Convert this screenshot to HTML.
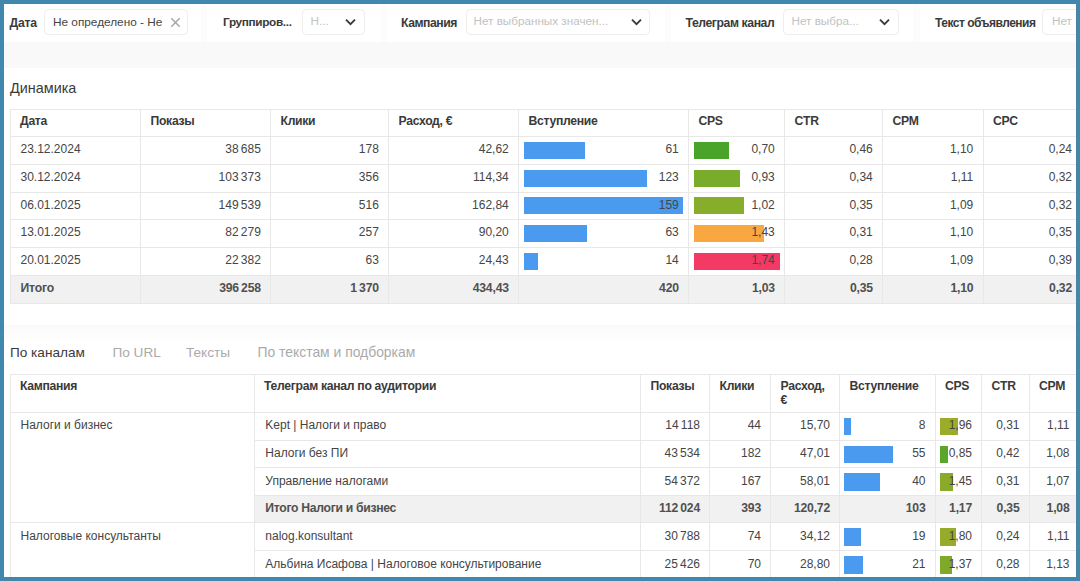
<!DOCTYPE html>
<html><head><meta charset="utf-8"><style>
html,body{margin:0;padding:0;}
body{width:1080px;height:581px;overflow:hidden;position:relative;background:#fff;font-family:"Liberation Sans", sans-serif;}
.t{position:absolute;line-height:1;white-space:nowrap;}
.r{position:absolute;}
.s{letter-spacing:-1.2px;}
.frame{position:absolute;left:0;top:0;width:1080px;height:581px;box-sizing:border-box;border:4px solid #4088ae;z-index:10;}
.frame2{position:absolute;left:3px;top:3px;width:1074px;height:575px;box-sizing:border-box;border:1px solid #4c83a2;z-index:11;}
</style></head><body>
<div class="r" style="left:4.00px;top:4.00px;width:1072.00px;height:38.00px;background:#fcfcfc;"></div>
<div class="r" style="left:4.00px;top:4.00px;width:196.50px;height:38.00px;background:#ffffff;"></div>
<div class="r" style="left:207.00px;top:4.00px;width:173.50px;height:38.00px;background:#ffffff;"></div>
<div class="r" style="left:387.00px;top:4.00px;width:277.50px;height:38.00px;background:#ffffff;"></div>
<div class="r" style="left:671.00px;top:4.00px;width:242.00px;height:38.00px;background:#ffffff;"></div>
<div class="r" style="left:920.00px;top:4.00px;width:156.00px;height:38.00px;background:#ffffff;"></div>
<div class="r" style="left:4.00px;top:42.00px;width:1072.00px;height:26.00px;background:#f9f9f9;"></div>
<div class="t" style="left:9.50px;top:16.57px;font-size:12.2px;font-weight:bold;color:#3a3a3a;letter-spacing:-0.25px;">Дата</div>
<div class="r" style="left:44px;top:9px;width:143.5px;height:25.5px;border:1px solid #ededed;border-radius:4.5px;box-sizing:border-box;background:#fff"></div>
<div class="t" style="left:53.00px;top:16.91px;font-size:11.8px;font-weight:normal;color:#444;">Не определено - Не</div>
<svg class="r" style="left:170px;top:17px" width="11" height="11" viewBox="0 0 11 11"><path d="M1.3 1.3 L9.7 9.7 M9.7 1.3 L1.3 9.7" fill="none" stroke="#a3a3a3" stroke-width="1.4"/></svg>
<div class="t" style="left:223.00px;top:16.91px;font-size:11.8px;font-weight:bold;color:#3a3a3a;letter-spacing:-0.35px;">Группиров...</div>
<div class="r" style="left:302px;top:9px;width:63px;height:25.5px;border:1px solid #ededed;border-radius:4.5px;box-sizing:border-box;background:#fff"></div>
<div class="t" style="left:310.50px;top:14.90px;font-size:11.7px;font-weight:normal;color:#c2c2c2;">Н...</div>
<svg class="r" style="left:344.5px;top:18px" width="11" height="8" viewBox="0 0 11 8"><path d="M1 1.6 L5.5 6.1 L10 1.6" fill="none" stroke="#3a3a3a" stroke-width="1.9"/></svg>
<div class="t" style="left:401.00px;top:16.57px;font-size:12.2px;font-weight:bold;color:#3a3a3a;letter-spacing:-0.45px;">Кампания</div>
<div class="r" style="left:466px;top:9px;width:183.5px;height:25.5px;border:1px solid #ededed;border-radius:4.5px;box-sizing:border-box;background:#fff"></div>
<div class="t" style="left:473.50px;top:14.90px;font-size:11.7px;font-weight:normal;color:#c2c2c2;">Нет выбранных значен...</div>
<svg class="r" style="left:630.5px;top:18px" width="11" height="8" viewBox="0 0 11 8"><path d="M1 1.6 L5.5 6.1 L10 1.6" fill="none" stroke="#3a3a3a" stroke-width="1.9"/></svg>
<div class="t" style="left:685.50px;top:16.57px;font-size:12.2px;font-weight:bold;color:#3a3a3a;letter-spacing:-0.4px;">Телеграм канал</div>
<div class="r" style="left:783px;top:9px;width:115.5px;height:25.5px;border:1px solid #ededed;border-radius:4.5px;box-sizing:border-box;background:#fff"></div>
<div class="t" style="left:791.50px;top:14.90px;font-size:11.7px;font-weight:normal;color:#c2c2c2;">Нет выбра...</div>
<svg class="r" style="left:879px;top:18px" width="11" height="8" viewBox="0 0 11 8"><path d="M1 1.6 L5.5 6.1 L10 1.6" fill="none" stroke="#3a3a3a" stroke-width="1.9"/></svg>
<div class="t" style="left:935.00px;top:16.74px;font-size:12px;font-weight:bold;color:#3a3a3a;letter-spacing:-0.5px;">Текст объявления</div>
<div class="r" style="left:1042px;top:9px;width:58px;height:25.5px;border:1px solid #ededed;border-radius:4.5px;box-sizing:border-box;background:#fff"></div>
<div class="t" style="left:1052.00px;top:14.90px;font-size:11.7px;font-weight:normal;color:#c2c2c2;">Нет выбранных</div>
<div class="t" style="left:10.00px;top:81.11px;font-size:14.4px;font-weight:normal;color:#3a3a3a;">Динамика</div>
<div class="r" style="left:10.00px;top:275.40px;width:1066.00px;height:27.80px;background:#f1f1f1;"></div>
<div class="r" style="left:10.00px;top:109.00px;width:1066.00px;height:1.00px;background:#e8e8e8;"></div>
<div class="r" style="left:10.00px;top:136.00px;width:1066.00px;height:1.00px;background:#e8e8e8;"></div>
<div class="r" style="left:10.00px;top:163.80px;width:1066.00px;height:1.00px;background:#e8e8e8;"></div>
<div class="r" style="left:10.00px;top:191.50px;width:1066.00px;height:1.00px;background:#e8e8e8;"></div>
<div class="r" style="left:10.00px;top:219.30px;width:1066.00px;height:1.00px;background:#e8e8e8;"></div>
<div class="r" style="left:10.00px;top:247.10px;width:1066.00px;height:1.00px;background:#e8e8e8;"></div>
<div class="r" style="left:10.00px;top:274.90px;width:1066.00px;height:1.00px;background:#e8e8e8;"></div>
<div class="r" style="left:10.00px;top:302.70px;width:1066.00px;height:1.00px;background:#e8e8e8;"></div>
<div class="r" style="left:9.50px;top:109.00px;width:1.00px;height:194.50px;background:#e8e8e8;"></div>
<div class="r" style="left:140.00px;top:109.00px;width:1.00px;height:194.50px;background:#e8e8e8;"></div>
<div class="r" style="left:270.00px;top:109.00px;width:1.00px;height:194.50px;background:#e8e8e8;"></div>
<div class="r" style="left:388.00px;top:109.00px;width:1.00px;height:194.50px;background:#e8e8e8;"></div>
<div class="r" style="left:518.00px;top:109.00px;width:1.00px;height:194.50px;background:#e8e8e8;"></div>
<div class="r" style="left:688.00px;top:109.00px;width:1.00px;height:194.50px;background:#e8e8e8;"></div>
<div class="r" style="left:784.00px;top:109.00px;width:1.00px;height:194.50px;background:#e8e8e8;"></div>
<div class="r" style="left:882.00px;top:109.00px;width:1.00px;height:194.50px;background:#e8e8e8;"></div>
<div class="r" style="left:982.50px;top:109.00px;width:1.00px;height:194.50px;background:#e8e8e8;"></div>
<div class="t" style="left:20.00px;top:114.97px;font-size:12.2px;font-weight:bold;color:#3a3a3a;letter-spacing:-0.3px;">Дата</div>
<div class="t" style="left:150.50px;top:114.97px;font-size:12.2px;font-weight:bold;color:#3a3a3a;letter-spacing:-0.3px;">Показы</div>
<div class="t" style="left:280.50px;top:114.97px;font-size:12.2px;font-weight:bold;color:#3a3a3a;letter-spacing:-0.3px;">Клики</div>
<div class="t" style="left:398.50px;top:114.97px;font-size:12.2px;font-weight:bold;color:#3a3a3a;letter-spacing:-0.3px;">Расход, €</div>
<div class="t" style="left:528.50px;top:114.97px;font-size:12.2px;font-weight:bold;color:#3a3a3a;letter-spacing:-0.3px;">Вступление</div>
<div class="t" style="left:698.50px;top:114.97px;font-size:12.2px;font-weight:bold;color:#3a3a3a;letter-spacing:-0.3px;">CPS</div>
<div class="t" style="left:794.50px;top:114.97px;font-size:12.2px;font-weight:bold;color:#3a3a3a;letter-spacing:-0.3px;">CTR</div>
<div class="t" style="left:892.50px;top:114.97px;font-size:12.2px;font-weight:bold;color:#3a3a3a;letter-spacing:-0.3px;">CPM</div>
<div class="t" style="left:993.00px;top:114.97px;font-size:12.2px;font-weight:bold;color:#3a3a3a;letter-spacing:-0.3px;">CPC</div>
<div class="r" style="left:524.40px;top:141.80px;width:61.00px;height:17.10px;background:#4a9bf0;"></div>
<div class="r" style="left:694.40px;top:141.80px;width:34.30px;height:17.10px;background:#4ba42a;"></div>
<div class="t" style="left:20.50px;top:143.14px;font-size:12px;font-weight:normal;color:#454545;">23.12.2024</div>
<div class="t" style="left:-139.20px;width:400px;text-align:right;top:143.14px;font-size:12px;font-weight:normal;color:#454545;">38<span class="s"> </span>685</div>
<div class="t" style="left:-21.20px;width:400px;text-align:right;top:143.14px;font-size:12px;font-weight:normal;color:#454545;">178</div>
<div class="t" style="left:108.80px;width:400px;text-align:right;top:143.14px;font-size:12px;font-weight:normal;color:#454545;">42,62</div>
<div class="t" style="left:278.80px;width:400px;text-align:right;top:143.14px;font-size:12px;font-weight:normal;color:#454545;">61</div>
<div class="t" style="left:374.80px;width:400px;text-align:right;top:143.14px;font-size:12px;font-weight:normal;color:#454545;">0,70</div>
<div class="t" style="left:472.80px;width:400px;text-align:right;top:143.14px;font-size:12px;font-weight:normal;color:#454545;">0,46</div>
<div class="t" style="left:573.30px;width:400px;text-align:right;top:143.14px;font-size:12px;font-weight:normal;color:#454545;">1,10</div>
<div class="t" style="left:672.00px;width:400px;text-align:right;top:143.14px;font-size:12px;font-weight:normal;color:#454545;">0,24</div>
<div class="r" style="left:524.40px;top:169.60px;width:123.00px;height:17.10px;background:#4a9bf0;"></div>
<div class="r" style="left:694.40px;top:169.60px;width:45.57px;height:17.10px;background:#7aac2b;"></div>
<div class="t" style="left:20.50px;top:170.94px;font-size:12px;font-weight:normal;color:#454545;">30.12.2024</div>
<div class="t" style="left:-139.20px;width:400px;text-align:right;top:170.94px;font-size:12px;font-weight:normal;color:#454545;">103<span class="s"> </span>373</div>
<div class="t" style="left:-21.20px;width:400px;text-align:right;top:170.94px;font-size:12px;font-weight:normal;color:#454545;">356</div>
<div class="t" style="left:108.80px;width:400px;text-align:right;top:170.94px;font-size:12px;font-weight:normal;color:#454545;">114,34</div>
<div class="t" style="left:278.80px;width:400px;text-align:right;top:170.94px;font-size:12px;font-weight:normal;color:#454545;">123</div>
<div class="t" style="left:374.80px;width:400px;text-align:right;top:170.94px;font-size:12px;font-weight:normal;color:#454545;">0,93</div>
<div class="t" style="left:472.80px;width:400px;text-align:right;top:170.94px;font-size:12px;font-weight:normal;color:#454545;">0,34</div>
<div class="t" style="left:573.30px;width:400px;text-align:right;top:170.94px;font-size:12px;font-weight:normal;color:#454545;">1,11</div>
<div class="t" style="left:672.00px;width:400px;text-align:right;top:170.94px;font-size:12px;font-weight:normal;color:#454545;">0,32</div>
<div class="r" style="left:524.40px;top:197.30px;width:159.00px;height:17.10px;background:#4a9bf0;"></div>
<div class="r" style="left:694.40px;top:197.30px;width:49.98px;height:17.10px;background:#86ae2a;"></div>
<div class="t" style="left:20.50px;top:198.64px;font-size:12px;font-weight:normal;color:#454545;">06.01.2025</div>
<div class="t" style="left:-139.20px;width:400px;text-align:right;top:198.64px;font-size:12px;font-weight:normal;color:#454545;">149<span class="s"> </span>539</div>
<div class="t" style="left:-21.20px;width:400px;text-align:right;top:198.64px;font-size:12px;font-weight:normal;color:#454545;">516</div>
<div class="t" style="left:108.80px;width:400px;text-align:right;top:198.64px;font-size:12px;font-weight:normal;color:#454545;">162,84</div>
<div class="t" style="left:278.80px;width:400px;text-align:right;top:198.64px;font-size:12px;font-weight:normal;color:#454545;">159</div>
<div class="t" style="left:374.80px;width:400px;text-align:right;top:198.64px;font-size:12px;font-weight:normal;color:#454545;">1,02</div>
<div class="t" style="left:472.80px;width:400px;text-align:right;top:198.64px;font-size:12px;font-weight:normal;color:#454545;">0,35</div>
<div class="t" style="left:573.30px;width:400px;text-align:right;top:198.64px;font-size:12px;font-weight:normal;color:#454545;">1,09</div>
<div class="t" style="left:672.00px;width:400px;text-align:right;top:198.64px;font-size:12px;font-weight:normal;color:#454545;">0,32</div>
<div class="r" style="left:524.40px;top:225.10px;width:63.00px;height:17.10px;background:#4a9bf0;"></div>
<div class="r" style="left:694.40px;top:225.10px;width:70.07px;height:17.10px;background:#f9a740;"></div>
<div class="t" style="left:20.50px;top:226.44px;font-size:12px;font-weight:normal;color:#454545;">13.01.2025</div>
<div class="t" style="left:-139.20px;width:400px;text-align:right;top:226.44px;font-size:12px;font-weight:normal;color:#454545;">82<span class="s"> </span>279</div>
<div class="t" style="left:-21.20px;width:400px;text-align:right;top:226.44px;font-size:12px;font-weight:normal;color:#454545;">257</div>
<div class="t" style="left:108.80px;width:400px;text-align:right;top:226.44px;font-size:12px;font-weight:normal;color:#454545;">90,20</div>
<div class="t" style="left:278.80px;width:400px;text-align:right;top:226.44px;font-size:12px;font-weight:normal;color:#454545;">63</div>
<div class="t" style="left:374.80px;width:400px;text-align:right;top:226.44px;font-size:12px;font-weight:normal;color:#454545;">1,43</div>
<div class="t" style="left:472.80px;width:400px;text-align:right;top:226.44px;font-size:12px;font-weight:normal;color:#454545;">0,31</div>
<div class="t" style="left:573.30px;width:400px;text-align:right;top:226.44px;font-size:12px;font-weight:normal;color:#454545;">1,10</div>
<div class="t" style="left:672.00px;width:400px;text-align:right;top:226.44px;font-size:12px;font-weight:normal;color:#454545;">0,35</div>
<div class="r" style="left:524.40px;top:252.90px;width:14.00px;height:17.10px;background:#4a9bf0;"></div>
<div class="r" style="left:694.40px;top:252.90px;width:85.26px;height:17.10px;background:#f23a64;"></div>
<div class="t" style="left:20.50px;top:254.24px;font-size:12px;font-weight:normal;color:#454545;">20.01.2025</div>
<div class="t" style="left:-139.20px;width:400px;text-align:right;top:254.24px;font-size:12px;font-weight:normal;color:#454545;">22<span class="s"> </span>382</div>
<div class="t" style="left:-21.20px;width:400px;text-align:right;top:254.24px;font-size:12px;font-weight:normal;color:#454545;">63</div>
<div class="t" style="left:108.80px;width:400px;text-align:right;top:254.24px;font-size:12px;font-weight:normal;color:#454545;">24,43</div>
<div class="t" style="left:278.80px;width:400px;text-align:right;top:254.24px;font-size:12px;font-weight:normal;color:#454545;">14</div>
<div class="t" style="left:374.80px;width:400px;text-align:right;top:254.24px;font-size:12px;font-weight:normal;color:#454545;">1,74</div>
<div class="t" style="left:472.80px;width:400px;text-align:right;top:254.24px;font-size:12px;font-weight:normal;color:#454545;">0,28</div>
<div class="t" style="left:573.30px;width:400px;text-align:right;top:254.24px;font-size:12px;font-weight:normal;color:#454545;">1,09</div>
<div class="t" style="left:672.00px;width:400px;text-align:right;top:254.24px;font-size:12px;font-weight:normal;color:#454545;">0,39</div>
<div class="t" style="left:20.50px;top:281.87px;font-size:12.2px;font-weight:bold;color:#505050;letter-spacing:-0.2px;">Итого</div>
<div class="t" style="left:-139.20px;width:400px;text-align:right;top:281.87px;font-size:12.2px;font-weight:bold;color:#505050;letter-spacing:-0.2px;">396<span class="s"> </span>258</div>
<div class="t" style="left:-21.20px;width:400px;text-align:right;top:281.87px;font-size:12.2px;font-weight:bold;color:#505050;letter-spacing:-0.2px;">1<span class="s"> </span>370</div>
<div class="t" style="left:108.80px;width:400px;text-align:right;top:281.87px;font-size:12.2px;font-weight:bold;color:#505050;letter-spacing:-0.2px;">434,43</div>
<div class="t" style="left:278.80px;width:400px;text-align:right;top:281.87px;font-size:12.2px;font-weight:bold;color:#505050;letter-spacing:-0.2px;">420</div>
<div class="t" style="left:374.80px;width:400px;text-align:right;top:281.87px;font-size:12.2px;font-weight:bold;color:#505050;letter-spacing:-0.2px;">1,03</div>
<div class="t" style="left:472.80px;width:400px;text-align:right;top:281.87px;font-size:12.2px;font-weight:bold;color:#505050;letter-spacing:-0.2px;">0,35</div>
<div class="t" style="left:573.30px;width:400px;text-align:right;top:281.87px;font-size:12.2px;font-weight:bold;color:#505050;letter-spacing:-0.2px;">1,10</div>
<div class="t" style="left:672.00px;width:400px;text-align:right;top:281.87px;font-size:12.2px;font-weight:bold;color:#505050;letter-spacing:-0.2px;">0,32</div>
<div class="r" style="left:4.00px;top:325.00px;width:1072.00px;height:15.00px;background:linear-gradient(#fafafa,#fefefe);"></div>
<div class="t" style="left:10.00px;top:345.89px;font-size:13.6px;font-weight:normal;color:#3a3a3a;">По каналам</div>
<div class="t" style="left:112.50px;top:345.89px;font-size:13.6px;font-weight:normal;color:#aaa;">По URL</div>
<div class="t" style="left:186.00px;top:345.89px;font-size:13.6px;font-weight:normal;color:#aaa;">Тексты</div>
<div class="t" style="left:257.50px;top:345.63px;font-size:13.9px;font-weight:normal;color:#aaa;">По текстам и подборкам</div>
<div class="r" style="left:254.00px;top:495.00px;width:822.00px;height:27.50px;background:#f1f1f1;"></div>
<div class="r" style="left:10.00px;top:373.50px;width:1066.00px;height:1.00px;background:#e8e8e8;"></div>
<div class="r" style="left:10.00px;top:411.50px;width:1066.00px;height:1.00px;background:#e8e8e8;"></div>
<div class="r" style="left:10.00px;top:522.00px;width:1066.00px;height:1.00px;background:#e8e8e8;"></div>
<div class="r" style="left:254.00px;top:439.50px;width:822.00px;height:1.00px;background:#e8e8e8;"></div>
<div class="r" style="left:254.00px;top:467.00px;width:822.00px;height:1.00px;background:#e8e8e8;"></div>
<div class="r" style="left:254.00px;top:494.50px;width:822.00px;height:1.00px;background:#e8e8e8;"></div>
<div class="r" style="left:254.00px;top:550.00px;width:822.00px;height:1.00px;background:#e8e8e8;"></div>
<div class="r" style="left:9.50px;top:374.00px;width:1.00px;height:206.00px;background:#e8e8e8;"></div>
<div class="r" style="left:253.50px;top:374.00px;width:1.00px;height:206.00px;background:#e8e8e8;"></div>
<div class="r" style="left:640.00px;top:374.00px;width:1.00px;height:206.00px;background:#e8e8e8;"></div>
<div class="r" style="left:709.00px;top:374.00px;width:1.00px;height:206.00px;background:#e8e8e8;"></div>
<div class="r" style="left:770.00px;top:374.00px;width:1.00px;height:206.00px;background:#e8e8e8;"></div>
<div class="r" style="left:839.00px;top:374.00px;width:1.00px;height:206.00px;background:#e8e8e8;"></div>
<div class="r" style="left:934.50px;top:374.00px;width:1.00px;height:206.00px;background:#e8e8e8;"></div>
<div class="r" style="left:981.00px;top:374.00px;width:1.00px;height:206.00px;background:#e8e8e8;"></div>
<div class="r" style="left:1028.50px;top:374.00px;width:1.00px;height:206.00px;background:#e8e8e8;"></div>
<div class="t" style="left:20px;top:378.62px;font-size:12.2px;letter-spacing:-0.3px;line-height:14.5px;font-weight:bold;color:#3a3a3a">Кампания</div>
<div class="t" style="left:264px;top:378.62px;font-size:12.2px;letter-spacing:-0.3px;line-height:14.5px;font-weight:bold;color:#3a3a3a">Телеграм канал по аудитории</div>
<div class="t" style="left:650.5px;top:378.62px;font-size:12.2px;letter-spacing:-0.3px;line-height:14.5px;font-weight:bold;color:#3a3a3a">Показы</div>
<div class="t" style="left:719.5px;top:378.62px;font-size:12.2px;letter-spacing:-0.3px;line-height:14.5px;font-weight:bold;color:#3a3a3a">Клики</div>
<div class="t" style="left:780.5px;top:378.62px;font-size:12.2px;letter-spacing:-0.3px;line-height:14.5px;font-weight:bold;color:#3a3a3a">Расход,<br>€</div>
<div class="t" style="left:849.5px;top:378.62px;font-size:12.2px;letter-spacing:-0.3px;line-height:14.5px;font-weight:bold;color:#3a3a3a">Вступление</div>
<div class="t" style="left:945px;top:378.62px;font-size:12.2px;letter-spacing:-0.3px;line-height:14.5px;font-weight:bold;color:#3a3a3a">CPS</div>
<div class="t" style="left:991.5px;top:378.62px;font-size:12.2px;letter-spacing:-0.3px;line-height:14.5px;font-weight:bold;color:#3a3a3a">CTR</div>
<div class="t" style="left:1039px;top:378.62px;font-size:12.2px;letter-spacing:-0.3px;line-height:14.5px;font-weight:bold;color:#3a3a3a">CPM</div>
<div class="r" style="left:844.40px;top:417.50px;width:7.08px;height:17.50px;background:#4a9bf0;"></div>
<div class="r" style="left:940.00px;top:417.50px;width:17.64px;height:17.50px;background:#9aac2a;"></div>
<div class="t" style="left:20.50px;top:419.04px;font-size:12px;font-weight:normal;color:#454545;">Налоги и бизнес</div>
<div class="t" style="left:265.30px;top:419.04px;font-size:12px;font-weight:normal;color:#454545;">Kept | Налоги и право</div>
<div class="t" style="left:300.00px;width:400px;text-align:right;top:419.04px;font-size:12px;font-weight:normal;color:#454545;">14<span class="s"> </span>118</div>
<div class="t" style="left:361.00px;width:400px;text-align:right;top:419.04px;font-size:12px;font-weight:normal;color:#454545;">44</div>
<div class="t" style="left:430.00px;width:400px;text-align:right;top:419.04px;font-size:12px;font-weight:normal;color:#454545;">15,70</div>
<div class="t" style="left:525.50px;width:400px;text-align:right;top:419.04px;font-size:12px;font-weight:normal;color:#454545;">8</div>
<div class="t" style="left:572.00px;width:400px;text-align:right;top:419.04px;font-size:12px;font-weight:normal;color:#454545;">1,96</div>
<div class="t" style="left:619.50px;width:400px;text-align:right;top:419.04px;font-size:12px;font-weight:normal;color:#454545;">0,31</div>
<div class="t" style="left:669.50px;width:400px;text-align:right;top:419.04px;font-size:12px;font-weight:normal;color:#454545;">1,11</div>
<div class="r" style="left:844.40px;top:445.50px;width:48.67px;height:17.50px;background:#4a9bf0;"></div>
<div class="r" style="left:940.00px;top:445.50px;width:7.65px;height:17.50px;background:#5aa52a;"></div>
<div class="t" style="left:265.30px;top:447.04px;font-size:12px;font-weight:normal;color:#454545;">Налоги без ПИ</div>
<div class="t" style="left:300.00px;width:400px;text-align:right;top:447.04px;font-size:12px;font-weight:normal;color:#454545;">43<span class="s"> </span>534</div>
<div class="t" style="left:361.00px;width:400px;text-align:right;top:447.04px;font-size:12px;font-weight:normal;color:#454545;">182</div>
<div class="t" style="left:430.00px;width:400px;text-align:right;top:447.04px;font-size:12px;font-weight:normal;color:#454545;">47,01</div>
<div class="t" style="left:525.50px;width:400px;text-align:right;top:447.04px;font-size:12px;font-weight:normal;color:#454545;">55</div>
<div class="t" style="left:572.00px;width:400px;text-align:right;top:447.04px;font-size:12px;font-weight:normal;color:#454545;">0,85</div>
<div class="t" style="left:619.50px;width:400px;text-align:right;top:447.04px;font-size:12px;font-weight:normal;color:#454545;">0,42</div>
<div class="t" style="left:669.50px;width:400px;text-align:right;top:447.04px;font-size:12px;font-weight:normal;color:#454545;">1,08</div>
<div class="r" style="left:844.40px;top:473.00px;width:35.40px;height:17.50px;background:#4a9bf0;"></div>
<div class="r" style="left:940.00px;top:473.00px;width:13.05px;height:17.50px;background:#8aaa2a;"></div>
<div class="t" style="left:265.30px;top:474.54px;font-size:12px;font-weight:normal;color:#454545;">Управление налогами</div>
<div class="t" style="left:300.00px;width:400px;text-align:right;top:474.54px;font-size:12px;font-weight:normal;color:#454545;">54<span class="s"> </span>372</div>
<div class="t" style="left:361.00px;width:400px;text-align:right;top:474.54px;font-size:12px;font-weight:normal;color:#454545;">167</div>
<div class="t" style="left:430.00px;width:400px;text-align:right;top:474.54px;font-size:12px;font-weight:normal;color:#454545;">58,01</div>
<div class="t" style="left:525.50px;width:400px;text-align:right;top:474.54px;font-size:12px;font-weight:normal;color:#454545;">40</div>
<div class="t" style="left:572.00px;width:400px;text-align:right;top:474.54px;font-size:12px;font-weight:normal;color:#454545;">1,45</div>
<div class="t" style="left:619.50px;width:400px;text-align:right;top:474.54px;font-size:12px;font-weight:normal;color:#454545;">0,31</div>
<div class="t" style="left:669.50px;width:400px;text-align:right;top:474.54px;font-size:12px;font-weight:normal;color:#454545;">1,07</div>
<div class="t" style="left:265.30px;top:501.87px;font-size:12.2px;font-weight:bold;color:#505050;letter-spacing:-0.3px;">Итого Налоги и бизнес</div>
<div class="t" style="left:300.00px;width:400px;text-align:right;top:501.87px;font-size:12.2px;font-weight:bold;color:#505050;letter-spacing:-0.2px;">112<span class="s"> </span>024</div>
<div class="t" style="left:361.00px;width:400px;text-align:right;top:501.87px;font-size:12.2px;font-weight:bold;color:#505050;letter-spacing:-0.2px;">393</div>
<div class="t" style="left:430.00px;width:400px;text-align:right;top:501.87px;font-size:12.2px;font-weight:bold;color:#505050;letter-spacing:-0.2px;">120,72</div>
<div class="t" style="left:525.50px;width:400px;text-align:right;top:501.87px;font-size:12.2px;font-weight:bold;color:#505050;letter-spacing:-0.2px;">103</div>
<div class="t" style="left:572.00px;width:400px;text-align:right;top:501.87px;font-size:12.2px;font-weight:bold;color:#505050;letter-spacing:-0.2px;">1,17</div>
<div class="t" style="left:619.50px;width:400px;text-align:right;top:501.87px;font-size:12.2px;font-weight:bold;color:#505050;letter-spacing:-0.2px;">0,35</div>
<div class="t" style="left:669.50px;width:400px;text-align:right;top:501.87px;font-size:12.2px;font-weight:bold;color:#505050;letter-spacing:-0.2px;">1,08</div>
<div class="r" style="left:844.40px;top:528.00px;width:16.82px;height:17.50px;background:#4a9bf0;"></div>
<div class="r" style="left:940.00px;top:528.00px;width:16.20px;height:17.50px;background:#96ab2a;"></div>
<div class="t" style="left:20.50px;top:529.54px;font-size:12px;font-weight:normal;color:#454545;">Налоговые консультанты</div>
<div class="t" style="left:265.30px;top:529.54px;font-size:12px;font-weight:normal;color:#454545;">nalog.konsultant</div>
<div class="t" style="left:300.00px;width:400px;text-align:right;top:529.54px;font-size:12px;font-weight:normal;color:#454545;">30<span class="s"> </span>788</div>
<div class="t" style="left:361.00px;width:400px;text-align:right;top:529.54px;font-size:12px;font-weight:normal;color:#454545;">74</div>
<div class="t" style="left:430.00px;width:400px;text-align:right;top:529.54px;font-size:12px;font-weight:normal;color:#454545;">34,12</div>
<div class="t" style="left:525.50px;width:400px;text-align:right;top:529.54px;font-size:12px;font-weight:normal;color:#454545;">19</div>
<div class="t" style="left:572.00px;width:400px;text-align:right;top:529.54px;font-size:12px;font-weight:normal;color:#454545;">1,80</div>
<div class="t" style="left:619.50px;width:400px;text-align:right;top:529.54px;font-size:12px;font-weight:normal;color:#454545;">0,24</div>
<div class="t" style="left:669.50px;width:400px;text-align:right;top:529.54px;font-size:12px;font-weight:normal;color:#454545;">1,11</div>
<div class="r" style="left:844.40px;top:556.00px;width:18.59px;height:17.50px;background:#4a9bf0;"></div>
<div class="r" style="left:940.00px;top:556.00px;width:12.33px;height:17.50px;background:#80a92a;"></div>
<div class="t" style="left:265.30px;top:557.54px;font-size:12px;font-weight:normal;color:#454545;">Альбина Исафова | Налоговое консультирование</div>
<div class="t" style="left:300.00px;width:400px;text-align:right;top:557.54px;font-size:12px;font-weight:normal;color:#454545;">25<span class="s"> </span>426</div>
<div class="t" style="left:361.00px;width:400px;text-align:right;top:557.54px;font-size:12px;font-weight:normal;color:#454545;">70</div>
<div class="t" style="left:430.00px;width:400px;text-align:right;top:557.54px;font-size:12px;font-weight:normal;color:#454545;">28,80</div>
<div class="t" style="left:525.50px;width:400px;text-align:right;top:557.54px;font-size:12px;font-weight:normal;color:#454545;">21</div>
<div class="t" style="left:572.00px;width:400px;text-align:right;top:557.54px;font-size:12px;font-weight:normal;color:#454545;">1,37</div>
<div class="t" style="left:619.50px;width:400px;text-align:right;top:557.54px;font-size:12px;font-weight:normal;color:#454545;">0,28</div>
<div class="t" style="left:669.50px;width:400px;text-align:right;top:557.54px;font-size:12px;font-weight:normal;color:#454545;">1,13</div>
<div class="frame"></div><div class="frame2"></div>
</body></html>
